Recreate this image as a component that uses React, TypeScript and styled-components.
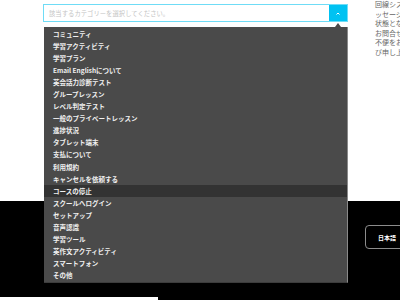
import React from "react";
import styled, { createGlobalStyle } from "styled-components";

const Global = createGlobalStyle`
  html, body { margin: 0; padding: 0; background: #fff; }
  body {
    width: 400px; height: 300px; overflow: hidden;
    font-family: "Noto Sans CJK JP", "Noto Sans", "Liberation Sans", sans-serif;
  }
`;

const Page = styled.div`
  width: 400px;
  height: 300px;
  display: flex;
  flex-direction: column;
  overflow: hidden;
`;

const Main = styled.main`
  height: 201px;
  background: #fff;
  display: flex;
  flex-direction: row;
  padding-left: 43px;
  gap: 27px;
  flex-shrink: 0;
`;

const FormColumn = styled.div`
  position: relative;
  width: 305px;
  flex-shrink: 0;
  display: flex;
  flex-direction: column;
  margin-top: -8px;
`;

const Label = styled.div`
  height: 12px;
  line-height: 8px;
  font-size: 6.5px;
  color: #aaa;
  padding-left: 6px;
`;

const SelectBox = styled.div`
  height: 18px;
  box-sizing: border-box;
  border: 1px solid #6fdcf6;
  display: flex;
  align-items: stretch;
  background: #fff;
`;

const Placeholder = styled.div`
  flex: 1;
  display: flex;
  align-items: center;
  padding-left: 5px;
  font-size: 6.3px;
  color: #c4c4c4;
  letter-spacing: 0.05px;
`;

const ToggleButton = styled.div`
  width: 18px;
  background: #00c2f2;
  display: flex;
  align-items: center;
  justify-content: center;
`;

const Menu = styled.ul`
  position: absolute;
  top: 35px;
  left: 1px;
  width: 304px;
  box-sizing: border-box;
  margin: 0;
  padding: 1px 0;
  list-style: none;
  background: #4a4a4a;
  border-right: 1px solid #8a8a8a;
  border-bottom: 1px solid #3c3c3c;
  z-index: 5;
  &::before {
    content: "";
    position: absolute;
    top: -4px;
    right: 6px;
    border-left: 3px solid transparent;
    border-right: 3px solid transparent;
    border-bottom: 4px solid #4a4a4a;
  }
`;

const MenuItem = styled.li<{ $active?: boolean }>`
  height: 12.05px;
  display: flex;
  align-items: center;
  padding-left: 9px;
  font-size: 6.5px;
  font-weight: 700;
  color: #f0f0f0;
  background: ${(p) => (p.$active ? "#333333" : "transparent")};
  white-space: nowrap;
`;

const Notice = styled.div`
  display: flex;
  flex-direction: column;
  white-space: nowrap;
`;

const NoticeLine = styled.div`
  font-size: 7px;
  line-height: 9.5px;
  color: #666;
`;

const Footer = styled.footer`
  flex: 1;
  background: #000;
  display: flex;
  justify-content: flex-end;
  align-items: flex-start;
  padding-top: 24px;
`;

const LangButton = styled.div`
  width: 50px;
  height: 24px;
  box-sizing: border-box;
  margin-right: -15px;
  border: 1px solid #8c8c8c;
  border-radius: 4px;
  display: flex;
  align-items: center;
  padding-left: 12px;
  font-size: 6px;
  font-weight: 700;
  color: #fff;
`;

const BottomWrap = styled.div`
  background: #000;
  flex-shrink: 0;
`;

const BottomStrip = styled.div`
  height: 3px;
  width: 158px;
  background: #fff;
`;

const items = [
  "コミュニティ",
  "学習アクティビティ",
  "学習プラン",
  "Email Englishについて",
  "英会話力診断テスト",
  "グループレッスン",
  "レベル判定テスト",
  "一般のプライベートレッスン",
  "進捗状況",
  "タブレット端末",
  "支払について",
  "利用規約",
  "キャンセルを依頼する",
  "コースの停止",
  "スクールへログイン",
  "セットアップ",
  "音声認識",
  "学習ツール",
  "英作文アクティビティ",
  "スマートフォン",
  "その他",
];

const notice = [
  "回線システムの障害により、メ",
  "ッセージの送受信ができない",
  "状態となっております。",
  "お問合せいただいた皆様にはご",
  "不便をおかけしておりますことを深く",
  "び申し上げます。",
];

export default function App() {
  return (
    <>
      <Global />
      <Page>
        <Main>
          <FormColumn>
            <Label>カテゴリー</Label>
            <SelectBox>
              <Placeholder>該当するカテゴリーを選択してください。</Placeholder>
              <ToggleButton>
                <svg width="4" height="3" viewBox="0 0 4 3">
                  <path d="M0.5 2.5 L2 1 L3.5 2.5" stroke="#fff" strokeWidth="1" fill="none" />
                </svg>
              </ToggleButton>
            </SelectBox>
            <Menu>
              {items.map((t) => (
                <MenuItem key={t} $active={t === "コースの停止"}>
                  {t}
                </MenuItem>
              ))}
            </Menu>
          </FormColumn>
          <Notice>
            {notice.map((l) => (
              <NoticeLine key={l}>{l}</NoticeLine>
            ))}
          </Notice>
        </Main>
        <Footer>
          <LangButton>日本語</LangButton>
        </Footer>
        <BottomWrap>
          <BottomStrip />
        </BottomWrap>
      </Page>
    </>
  );
}
